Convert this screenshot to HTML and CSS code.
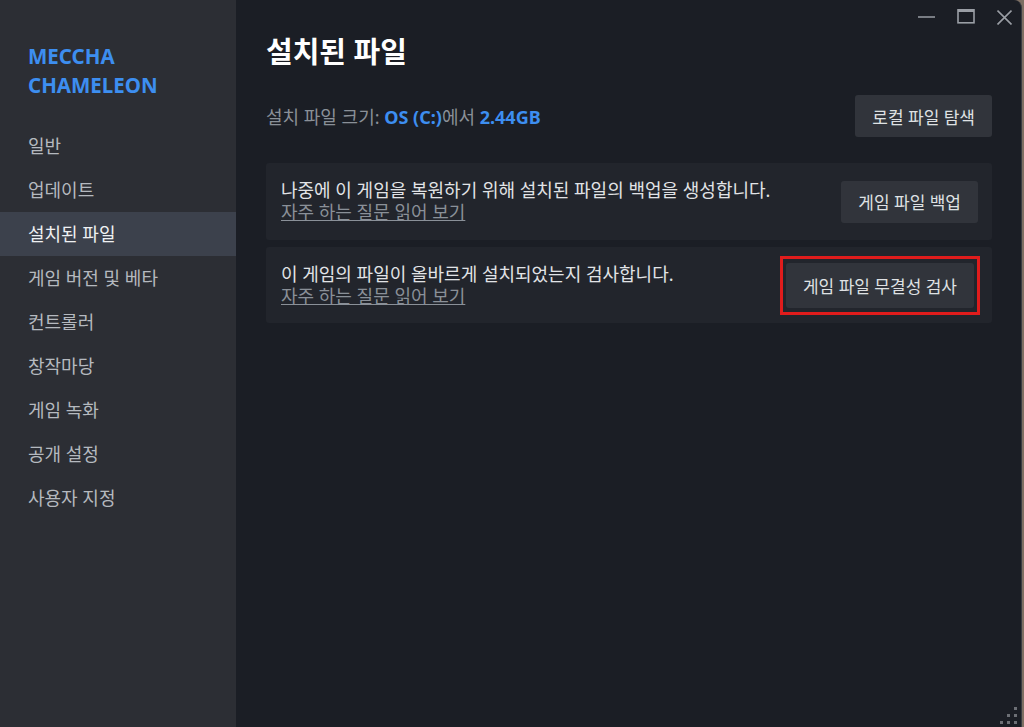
FILE: index.html
```html
<!DOCTYPE html>
<html lang="ko">
<head>
    <meta charset="UTF-8">
    <meta name="viewport" content="width=device-width, initial-scale=1.0">
    <title>MECCHA CHAMELEON - 속성</title>
    <link rel="stylesheet" href="styles.css">
</head>
<body>
    <div class="window">
        <aside class="sidebar">
            <div class="game-title">MECCHA<br>CHAMELEON</div>
            <nav class="menu">
                <a href="#">일반</a>
                <a href="#">업데이트</a>
                <a href="#" class="active">설치된 파일</a>
                <a href="#">게임 버전 및 베타</a>
                <a href="#">컨트롤러</a>
                <a href="#">창작마당</a>
                <a href="#">게임 녹화</a>
                <a href="#">공개 설정</a>
                <a href="#">사용자 지정</a>
            </nav>
        </aside>

        <main class="content">
            <div class="titlebar">
                <button class="win-btn" title="최소화">
                    <svg width="17" height="18" viewBox="0 0 17 18"><line x1="0" y1="10" x2="17" y2="10" stroke="#9a9ea5" stroke-width="1.6"/></svg>
                </button>
                <button class="win-btn" title="최대화">
                    <svg width="18" height="18" viewBox="0 0 18 18"><rect x="1" y="2.8" width="16" height="13" fill="none" stroke="#9a9ea5" stroke-width="1.6"/><line x1="1" y1="3.8" x2="17" y2="3.8" stroke="#9a9ea5" stroke-width="2.6"/></svg>
                </button>
                <button class="win-btn" title="닫기">
                    <svg width="15" height="18" viewBox="0 0 15 18"><path d="M0.5 3.5 L14.5 17.5 M14.5 3.5 L0.5 17.5" stroke="#9a9ea5" stroke-width="1.6"/></svg>
                </button>
            </div>

            <h1>설치된 파일</h1>

            <div class="size-row">
                <p class="size-info">설치 파일 크기: <span class="hl">OS (C:)</span>에서 <span class="hl">2.44GB</span></p>
                <button class="btn">로컬 파일 탐색</button>
            </div>

            <div class="panel">
                <div class="panel-text">
                    <p>나중에 이 게임을 복원하기 위해 설치된 파일의 백업을 생성합니다.</p>
                    <a href="#">자주 하는 질문 읽어 보기</a>
                </div>
                <button class="btn">게임 파일 백업</button>
            </div>

            <div class="panel panel-mark">
                <div class="panel-text">
                    <p>이 게임의 파일이 올바르게 설치되었는지 검사합니다.</p>
                    <a href="#">자주 하는 질문 읽어 보기</a>
                </div>
                <div class="highlight">
                    <button class="btn btn-tall">게임 파일 무결성 검사</button>
                </div>
            </div>
        </main>

        <!-- 크기 조절 손잡이 -->
        <div class="grip">
            <span style="grid-column: 3; grid-row: 1"></span>
            <span style="grid-column: 2; grid-row: 2"></span>
            <span style="grid-column: 3; grid-row: 2"></span>
            <span style="grid-column: 1; grid-row: 3"></span>
            <span style="grid-column: 2; grid-row: 3"></span>
            <span style="grid-column: 3; grid-row: 3"></span>
        </div>
    </div>
</body>
</html>
```

FILE: styles.css
```css
body {
    margin: 0;
    background-color: #7d6f63;
    font-family: "Noto Sans", "Noto Sans CJK KR", sans-serif;
    overflow: hidden;
}
.window {
    position: relative;
    display: flex;
    width: 1021px;
    height: 727px;
    background-color: #1b1e25;
    border-right: 1px solid #3a3d44;
    border-top-right-radius: 8px;
    overflow: hidden;
}
.sidebar {
    width: 236px;
    flex-shrink: 0;
    background-color: #2c2e34;
    padding-top: 42px;
    box-sizing: border-box;
}
.game-title {
    color: #3d8ef0;
    font-weight: bold;
    font-size: 20.5px;
    line-height: 29px;
    padding-left: 28px;
}
.menu {
    margin-top: 24px;
    display: flex;
    flex-direction: column;
}
.menu a {
    display: block;
    height: 44px;
    line-height: 44px;
    padding-left: 28px;
    font-size: 18px;
    color: #b5b9bf;
    text-decoration: none;
}
.menu a.active {
    background-color: #3c414c;
    color: #eef0f2;
}
.content {
    flex: 1;
    padding: 0 29px 0 30px;
    box-sizing: border-box;
}
.titlebar {
    display: flex;
    justify-content: flex-end;
    height: 35px;
    margin-right: -29px;
    padding-right: 9px;
    gap: 22px;
}
.win-btn {
    background: none;
    border: none;
    padding: 0;
    padding-top: 7px;
    height: 35px;
    display: flex;
    align-items: flex-start;
    box-sizing: border-box;
    cursor: pointer;
}
h1 {
    margin: 0;
    color: #ffffff;
    font-size: 29px;
    font-weight: bold;
    line-height: 34px;
}
.size-row {
    display: flex;
    justify-content: space-between;
    align-items: center;
    margin-top: 26px;
}
.size-info {
    margin: 0;
    color: #8a9098;
    font-size: 18px;
}
.size-info .hl {
    color: #3d8ef0;
    font-weight: bold;
}
.btn {
    background-color: #31343b;
    color: #dfe1e3;
    border: none;
    border-radius: 3px;
    height: 42px;
    padding: 0 17px;
    font-family: inherit;
    font-size: 17px;
    cursor: pointer;
}
.btn-tall {
    height: 45px;
}
.panel {
    display: flex;
    justify-content: space-between;
    align-items: center;
    background-color: #22252c;
    border-radius: 3px;
    min-height: 77px;
    margin-top: 26px;
    padding: 0 14px 0 15px;
    box-sizing: border-box;
}
.panel + .panel {
    margin-top: 7px;
}
.panel-mark {
    min-height: 76px;
    padding-right: 12px;
}
.panel-text p {
    margin: 0;
    color: #e1e3e6;
    font-size: 18px;
    line-height: 22px;
}
.panel-text a {
    display: inline-block;
    color: #8a9098;
    font-size: 18px;
    line-height: 22px;
}
.highlight {
    border: 3px solid #e01c1c;
    padding: 4px 3px;
}
.grip {
    position: absolute;
    right: 4px;
    bottom: 3px;
    display: grid;
    grid-template-columns: repeat(3, 3px);
    grid-template-rows: repeat(3, 3px);
    gap: 4px;
}
.grip span {
    background-color: #6c6f75;
}
```
